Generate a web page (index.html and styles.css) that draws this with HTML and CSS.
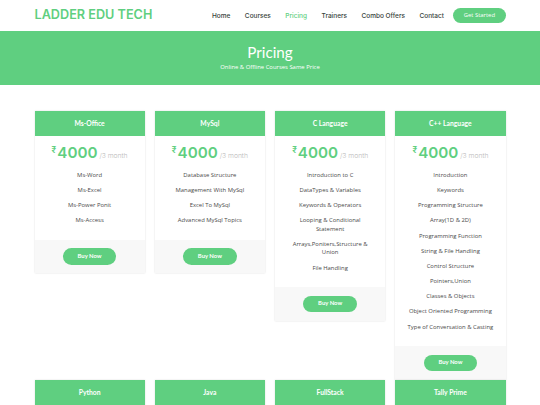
FILE: index.html
```html
<!DOCTYPE html>
<html lang="en">
<head>
<meta charset="utf-8">
<title>Pricing - Ladder Edu Tech</title>
<link rel="stylesheet" href="styles.css">
</head>
<body>
<header class="site-header">
  <div class="container header-inner">
    <h1 class="logo">Ladder Edu Tech</h1>
    <nav>
      <ul class="nav">
        <li><a href="#">Home</a></li>
        <li><a href="#">Courses</a></li>
        <li><a href="#" class="active">Pricing</a></li>
        <li><a href="#">Trainers</a></li>
        <li><a href="#">Combo Offers</a></li>
        <li><a href="#">Contact</a></li>
      </ul>
    </nav>
    <a href="#" class="btn-start">Get Started</a>
  </div>
</header>

<section class="hero">
  <h2>Pricing</h2>
  <p>Online &amp; Offline Courses Same Price</p>
</section>

<section class="pricing">
  <div class="container grid">
    <div class="card">
      <h3 class="card-head">Ms-Office</h3>
      <div class="card-body">
        <h4 class="price"><sup>₹</sup>4000<span class="per"> /3 month</span></h4>
        <ul class="features">
          <li>Ms-Word</li>
          <li>Ms-Excel</li>
          <li>Ms-Power Ponit</li>
          <li>Ms-Access</li>
        </ul>
      </div>
      <div class="card-foot"><a href="#" class="buy">Buy Now</a></div>
    </div>

    <div class="card">
      <h3 class="card-head">MySql</h3>
      <div class="card-body">
        <h4 class="price"><sup>₹</sup>4000<span class="per"> /3 month</span></h4>
        <ul class="features">
          <li>Database Structure</li>
          <li>Management With MySql</li>
          <li>Excel To MySql</li>
          <li>Advanced MySql Topics</li>
        </ul>
      </div>
      <div class="card-foot"><a href="#" class="buy">Buy Now</a></div>
    </div>

    <div class="card">
      <h3 class="card-head">C Language</h3>
      <div class="card-body">
        <h4 class="price"><sup>₹</sup>4000<span class="per"> /3 month</span></h4>
        <ul class="features">
          <li>Introduction to C</li>
          <li>DataTypes &amp; Variables</li>
          <li>Keywords &amp; Operators</li>
          <li>Looping &amp; Conditional Statement</li>
          <li>Arrays,Poniters,Structure &amp; Union</li>
          <li>File Handling</li>
        </ul>
      </div>
      <div class="card-foot"><a href="#" class="buy">Buy Now</a></div>
    </div>

    <div class="card">
      <h3 class="card-head">C++ Language</h3>
      <div class="card-body">
        <h4 class="price"><sup>₹</sup>4000<span class="per"> /3 month</span></h4>
        <ul class="features">
          <li>Introduction</li>
          <li>Keywords</li>
          <li>Programming Structure</li>
          <li>Array(1D &amp; 2D)</li>
          <li>Programming Function</li>
          <li>String &amp; File Handling</li>
          <li>Control Structure</li>
          <li>Pointers,Union</li>
          <li>Classes &amp; Objects</li>
          <li>Object Oriented Programming</li>
          <li>Type of Conversation &amp; Casting</li>
        </ul>
      </div>
      <div class="card-foot"><a href="#" class="buy">Buy Now</a></div>
    </div>

    <div class="card">
      <h3 class="card-head">Python</h3>
      <div class="card-body">
        <h4 class="price"><sup>₹</sup>4000<span class="per"> /3 month</span></h4>
      </div>
      <div class="card-foot"><a href="#" class="buy">Buy Now</a></div>
    </div>

    <div class="card">
      <h3 class="card-head">Java</h3>
      <div class="card-body">
        <h4 class="price"><sup>₹</sup>4000<span class="per"> /3 month</span></h4>
      </div>
      <div class="card-foot"><a href="#" class="buy">Buy Now</a></div>
    </div>

    <div class="card">
      <h3 class="card-head">FullStack</h3>
      <div class="card-body">
        <h4 class="price"><sup>₹</sup>4000<span class="per"> /3 month</span></h4>
      </div>
      <div class="card-foot"><a href="#" class="buy">Buy Now</a></div>
    </div>

    <div class="card">
      <h3 class="card-head">Tally Prime</h3>
      <div class="card-body">
        <h4 class="price"><sup>₹</sup>4000<span class="per"> /3 month</span></h4>
      </div>
      <div class="card-foot"><a href="#" class="buy">Buy Now</a></div>
    </div>
  </div>
</section>
</body>
</html>
```

FILE: styles.css
```css
* { box-sizing: border-box; }

body {
  margin: 0;
  font-family: "Open Sans", "DejaVu Sans", sans-serif;
  color: #444444;
  background: #ffffff;
}

.container {
  width: 471px;
  margin: 0 auto;
}

/* Header */
.site-header {
  background: #ffffff;
}

.header-inner {
  height: 31px;
  display: flex;
  align-items: center;
}

.logo {
  margin: 0 auto 0 0;
  font-family: "Inter", sans-serif;
  font-weight: 600;
  font-size: 12.66px;
  letter-spacing: 0;
  line-height: 1;
  color: #5fcf80;
  text-transform: uppercase;
}

.nav {
  display: flex;
  align-items: center;
  list-style: none;
  margin: 0;
  padding: 0;
}

.nav a {
  display: block;
  padding-left: 14.5px;
  font-family: "Inter", sans-serif;
  font-size: 6.5px;
  font-weight: 500;
  color: #37423b;
  text-decoration: none;
}

.nav a.active { color: #5fcf80; }

.btn-start {
  margin-left: 9.3px;
  background: #5fcf80;
  color: #ffffff;
  border-radius: 21px;
  padding: 3.4px 10.5px;
  font-size: 5.9px;
  line-height: 8.86px;
  text-decoration: none;
}

/* Breadcrumb hero */
.hero {
  background: #5fcf80;
  color: #ffffff;
  text-align: center;
  padding: 12px 0 13.6px;
}

.hero h2 {
  margin: 0 0 2px;
  font-family: "Lato", sans-serif;
  font-weight: 400;
  font-size: 15.2px;
  line-height: 18px;
}

.hero p {
  margin: 0;
  font-size: 5.9px;
  line-height: 8.86px;
}

/* Pricing */
.pricing {
  padding: 25.3px 0;
}

.grid {
  display: grid;
  grid-template-columns: repeat(4, 1fr);
  column-gap: 10.1px;
  row-gap: 0;
  align-items: start;
}

.card {
  background: #ffffff;
  box-shadow: 0 0 1.7px rgba(0, 0, 0, 0.14);
  text-align: center;
}

.card-head {
  margin: 0;
  padding: 8.44px 6.3px;
  background: #5fcf80;
  color: #ffffff;
  font-family: "Lato", sans-serif;
  font-size: 6.75px;
  font-weight: 700;
  line-height: 8.1px;
}

.card-body {
  padding: 8.44px 10px 0;
}

.price {
  margin: 0 0 8.44px;
  font-family: "Inter", "DejaVu Sans", sans-serif;
  font-size: 15.2px;
  font-weight: 600;
  line-height: 18.2px;
  color: #5fcf80;
}

.price sup {
  font-size: 8.44px;
  line-height: 0;
  vertical-align: 5px;
  margin-right: 1px;
}

.price .per {
  color: #bababa;
  font-size: 6.75px;
  font-weight: 300;
  line-height: 1;
}

.features {
  list-style: none;
  margin: 0;
  padding: 0;
  font-size: 5.9px;
  line-height: 8.44px;
  color: #4a4a4a;
}

.features li {
  padding-bottom: 6.75px;
}

.card-foot {
  margin-top: 8.44px;
  padding: 8.44px 6.3px;
  background: #f8f8f8;
  display: flex;
  justify-content: center;
}

.buy {
  display: block;
  background: #5fcf80;
  color: #ffffff;
  border-radius: 21px;
  padding: 3.4px 14.8px 4.2px;
  font-family: "Lato", sans-serif;
  font-size: 5.9px;
  font-weight: 700;
  line-height: 8.86px;
  text-decoration: none;
}
```
